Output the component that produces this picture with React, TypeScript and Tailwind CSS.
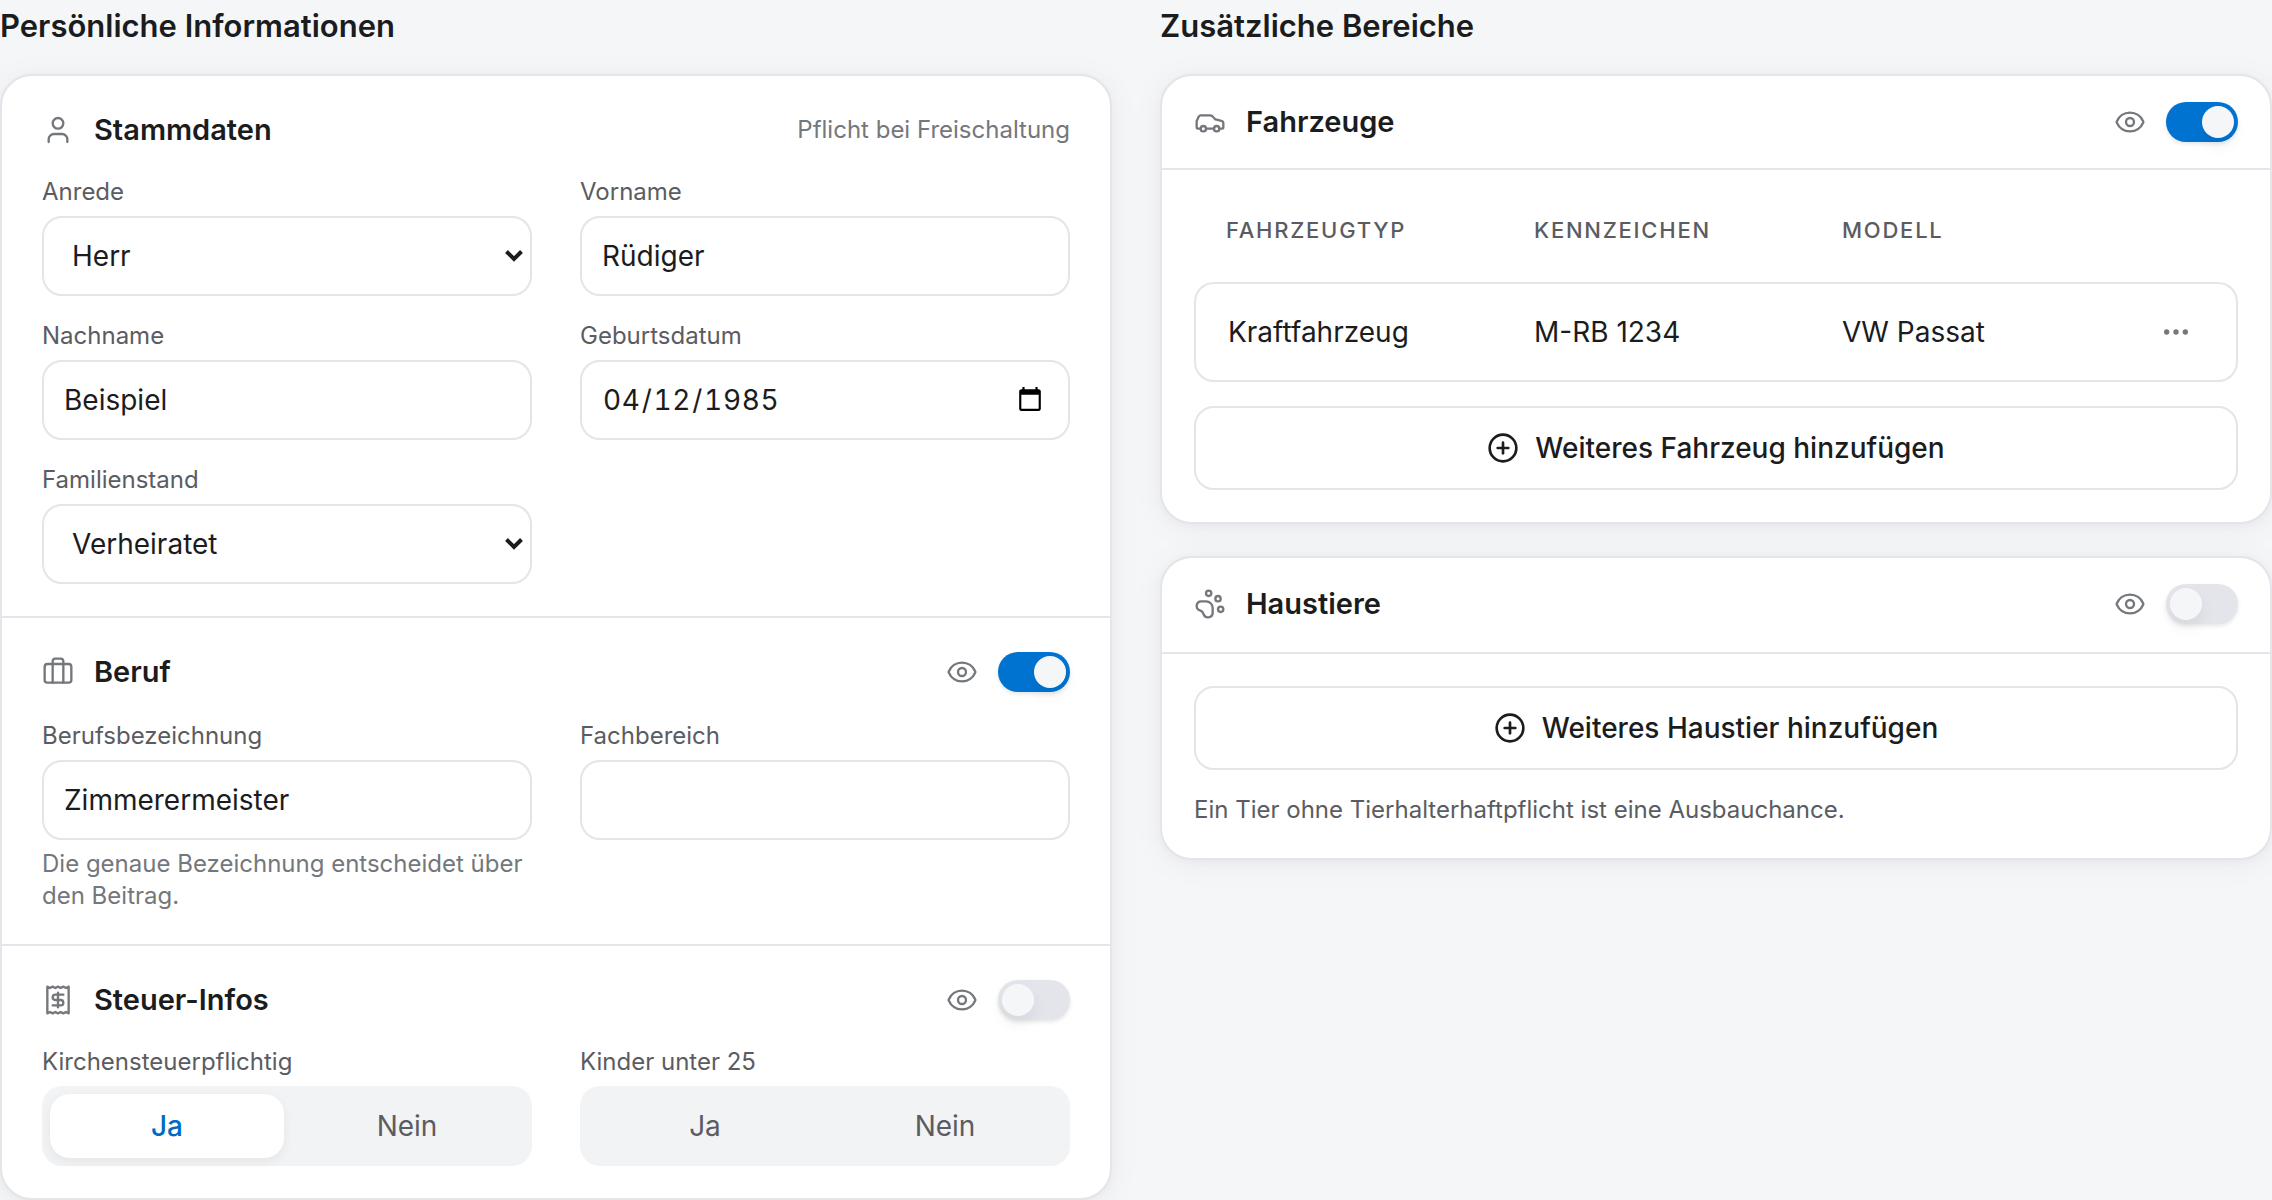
import { useId, useState } from "react";
import type { ReactNode } from "react";
import {
  Briefcase,
  Car,
  CirclePlus,
  Ellipsis,
  Eye,
  PawPrint,
  Receipt,
  User,
} from "lucide-react";

const fieldBox =
  "h-20 w-full rounded-[20px] border-2 border-[#e4e4ea] bg-white px-5 text-[28px] text-[#1b1c1e] outline-none focus:border-[#0073d1]";

function Field({ label, id, children }: { label: string; id: string; children: ReactNode }) {
  return (
    <div className="flex flex-col gap-2">
      <label htmlFor={id} className="text-2xl text-[#5b5c61]">
        {label}
      </label>
      {children}
    </div>
  );
}

function TextField({ label, value = "", hint }: { label: string; value?: string; hint?: string }) {
  const id = useId();
  return (
    <Field label={label} id={id}>
      <input id={id} type="text" defaultValue={value} className={fieldBox} />
      {hint && <p className="text-2xl text-[#74777c]">{hint}</p>}
    </Field>
  );
}

function DateField({ label, value }: { label: string; value: string }) {
  const id = useId();
  return (
    <Field label={label} id={id}>
      <input
        id={id}
        type="date"
        defaultValue={value}
        className={`${fieldBox} tracking-wide tabular-nums [&::-webkit-calendar-picker-indicator]:mr-0.5 [&::-webkit-calendar-picker-indicator]:size-7`}
      />
    </Field>
  );
}

function SelectField({ label, value, options }: { label: string; value: string; options: string[] }) {
  const id = useId();
  return (
    <Field label={label} id={id}>
      <div className="relative">
        <select id={id} defaultValue={value} className={`${fieldBox} appearance-none pl-7`}>
          {options.map((o) => (
            <option key={o}>{o}</option>
          ))}
        </select>
        <svg
          viewBox="0 0 18 12"
          className="pointer-events-none absolute top-[34px] right-[9px] h-3 w-[18px]"
          fill="none"
          stroke="#1b1c1e"
          strokeWidth="4"
          aria-hidden="true"
        >
          <path d="M1.5 1.5 9 9l7.5-7.5" />
        </svg>
      </div>
    </Field>
  );
}

function Toggle({ label, initial }: { label: string; initial: boolean }) {
  return (
    <label className="relative flex cursor-pointer">
      <input type="checkbox" role="switch" aria-label={label} defaultChecked={initial} className="peer sr-only" />
      <span className="flex h-10 w-[72px] items-center rounded-full bg-[#e4e5ea] p-1 shadow-[0_2px_4px_rgba(0,0,0,0.1)] peer-checked:justify-end peer-checked:bg-[#0073d1]">
        <span className="size-8 rounded-full bg-[#f5f6f8] shadow-[0_8px_16px_rgba(0,0,0,0.06)]" />
      </span>
    </label>
  );
}

function SectionHeader({ icon, title, children }: { icon: ReactNode; title: string; children: ReactNode }) {
  return (
    <div className="flex h-11 items-center justify-between">
      <h3 className="flex items-center gap-5 text-[29px] font-semibold text-[#1b1c1e]">
        <span className="text-[#74777c]">{icon}</span>
        {title}
      </h3>
      <div className="flex items-center gap-5">{children}</div>
    </div>
  );
}

function Visibility({ title, on }: { title: string; on: boolean }) {
  return (
    <>
      <button type="button" aria-label={`${title} anzeigen`} className="text-[#74777c]">
        <Eye size={32} strokeWidth={1.75} />
      </button>
      <Toggle label={`${title} aktivieren`} initial={on} />
    </>
  );
}

function Segmented({ label, initial }: { label: string; initial?: string }) {
  const name = useId();
  const [value, setValue] = useState(initial);
  return (
    <fieldset>
      <legend className="mb-2 text-2xl text-[#5b5c61]">{label}</legend>
      <div className="flex h-20 gap-1.5 rounded-[20px] bg-[#f2f3f5] p-2">
        {["Ja", "Nein"].map((o) => (
          <label
            key={o}
            className="relative flex flex-1 cursor-pointer items-center justify-center rounded-[20px] text-[28px] text-[#5b5c61] has-checked:bg-white has-checked:font-medium has-checked:text-[#006bc2] has-checked:shadow-[0_4px_12px_rgba(0,0,0,0.06)]"
          >
            <input type="radio" name={name} checked={value === o} onChange={() => setValue(o)} className="sr-only" />
            {o}
          </label>
        ))}
      </div>
    </fieldset>
  );
}

const card =
  "rounded-[32px] border-2 border-[#e4e4ea] bg-white shadow-[0_4px_32px_rgba(0,0,0,0.05),0_2px_8px_rgba(0,0,0,0.03)]";

const columnTitle = "mb-[22px] text-[31px] leading-[52px] font-semibold text-[#1b1c1e]";

function AddButton({ children }: { children: ReactNode }) {
  return (
    <button
      type="button"
      className="flex h-21 w-full items-center justify-center gap-4 rounded-[20px] border-2 border-[#e4e4ea] text-[28px] font-medium text-[#1b1c1e]"
    >
      <CirclePlus size={32} strokeWidth={2} />
      {children}
    </button>
  );
}

export default function App() {
  return (
    <main className="grid min-h-screen grid-cols-2 items-start gap-12 bg-[#f5f6f8] font-['Inter',sans-serif]">
      <section>
        <h2 className={columnTitle}>Persönliche Informationen</h2>
        <div className={`${card} divide-y-2 divide-[#e4e4ea]`}>
          <div className="px-10 py-8">
            <SectionHeader icon={<User size={32} strokeWidth={1.75} />} title="Stammdaten">
              <span className="text-2xl text-[#74777c]">Pflicht bei Freischaltung</span>
            </SectionHeader>
            <div className="mt-6 grid grid-cols-2 gap-x-12 gap-y-6">
              <SelectField label="Anrede" value="Herr" options={["Herr", "Frau", "Divers"]} />
              <TextField label="Vorname" value="Rüdiger" />
              <TextField label="Nachname" value="Beispiel" />
              <DateField label="Geburtsdatum" value="1985-04-12" />
              <SelectField
                label="Familienstand"
                value="Verheiratet"
                options={["Ledig", "Verheiratet", "Geschieden", "Verwitwet"]}
              />
            </div>
          </div>
          <div className="px-10 py-8">
            <SectionHeader icon={<Briefcase size={32} strokeWidth={1.75} />} title="Beruf">
              <Visibility title="Beruf" on />
            </SectionHeader>
            <div className="mt-[26px] grid grid-cols-2 gap-x-12">
              <TextField
                label="Berufsbezeichnung"
                value="Zimmerermeister"
                hint="Die genaue Bezeichnung entscheidet über den Beitrag."
              />
              <TextField label="Fachbereich" />
            </div>
          </div>
          <div className="px-10 py-8">
            <SectionHeader icon={<Receipt size={32} strokeWidth={1.75} />} title="Steuer-Infos">
              <Visibility title="Steuer-Infos" on={false} />
            </SectionHeader>
            <div className="mt-6 grid grid-cols-2 gap-x-12">
              <Segmented label="Kirchensteuerpflichtig" initial="Ja" />
              <Segmented label="Kinder unter 25" />
            </div>
          </div>
        </div>
      </section>

      <section>
        <h2 className={columnTitle}>Zusätzliche Bereiche</h2>
        <div className="flex flex-col gap-8">
          <div className={card}>
            <div className="border-b-2 border-[#e4e4ea] px-8 py-6">
              <SectionHeader icon={<Car size={32} strokeWidth={1.75} />} title="Fahrzeuge">
                <Visibility title="Fahrzeuge" on />
              </SectionHeader>
            </div>
            <div className="p-8">
              <table className="mb-6 w-full table-fixed border-separate border-spacing-0 text-left text-[28px] text-[#1b1c1e]">
                <thead>
                  <tr className="h-20 text-[22px] tracking-[0.08em] text-[#5b5c61] uppercase">
                    <th className="px-8 pb-6 font-medium">Fahrzeugtyp</th>
                    <th className="px-8 pb-6 font-medium">Kennzeichen</th>
                    <th className="px-8 pb-6 font-medium">Modell</th>
                    <th className="w-[120px]" aria-label="Aktionen" />
                  </tr>
                </thead>
                <tbody>
                  <tr className="h-25">
                    <td className="rounded-l-[20px] border-y-2 border-l-2 border-[#e4e4ea] px-8">Kraftfahrzeug</td>
                    <td className="border-y-2 border-[#e4e4ea] px-8">M-RB 1234</td>
                    <td className="border-y-2 border-[#e4e4ea] px-8">VW Passat</td>
                    <td className="rounded-r-[20px] border-y-2 border-r-2 border-[#e4e4ea] pr-8 pl-7.5">
                      <button
                        type="button"
                        aria-label="Aktionen"
                        className="flex size-14 items-center justify-center text-[#74777c]"
                      >
                        <Ellipsis size={32} strokeWidth={2} />
                      </button>
                    </td>
                  </tr>
                </tbody>
              </table>
              <AddButton>Weiteres Fahrzeug hinzufügen</AddButton>
            </div>
          </div>
          <div className={card}>
            <div className="border-b-2 border-[#e4e4ea] px-8 pt-6 pb-[26px]">
              <SectionHeader icon={<PawPrint size={32} strokeWidth={1.75} />} title="Haustiere">
                <Visibility title="Haustiere" on={false} />
              </SectionHeader>
            </div>
            <div className="p-8">
              <AddButton>Weiteres Haustier hinzufügen</AddButton>
              <p className="mt-6 text-2xl text-[#5b5c61]">
                Ein Tier ohne Tierhalterhaftpflicht ist eine Ausbauchance.
              </p>
            </div>
          </div>
        </div>
      </section>
    </main>
  );
}
